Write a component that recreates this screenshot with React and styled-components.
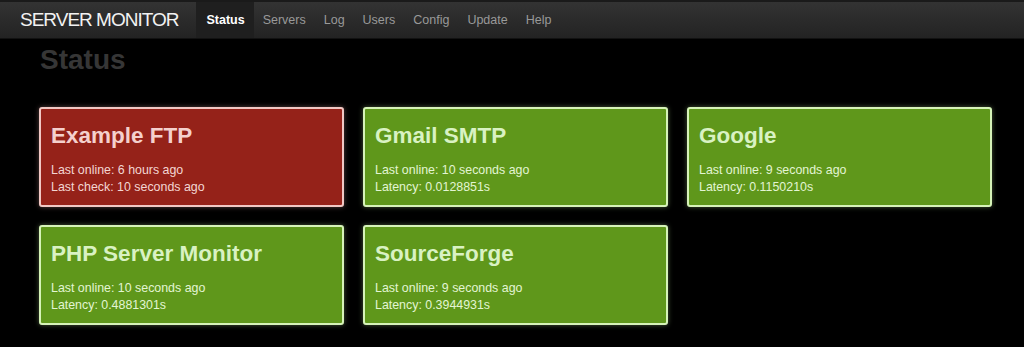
import React from "react";
import styled, { createGlobalStyle } from "styled-components";

const GlobalStyle = createGlobalStyle`
  html, body {
    margin: 0;
    padding: 0;
    background: #000;
  }
  body {
    font-family: "Liberation Sans", Arial, sans-serif;
  }
`;

const Page = styled.div`
  width: 1024px;
  min-height: 347px;
  background: #000;
`;

const Navbar = styled.nav`
  display: flex;
  align-items: stretch;
  height: 36px;
  border-top: 2px solid #1a1a1a;
  border-bottom: 1px solid #121212;
  background: linear-gradient(to bottom, #333333, #232323);
`;

const Brand = styled.a`
  display: flex;
  align-items: center;
  padding: 0 18px 0 20px;
  color: #f2f2f2;
  font-size: 19px;
  letter-spacing: -1px;
  text-decoration: none;
`;

const NavList = styled.ul`
  display: flex;
  margin: 0;
  padding: 0;
  list-style: none;
`;

const NavItem = styled.li`
  display: flex;
  align-items: center;
  padding: 0 9px;
  font-size: 12.5px;
  font-weight: ${(p) => (p.$active ? "bold" : "normal")};
  color: ${(p) => (p.$active ? "#ffffff" : "#999999")};
  background: ${(p) => (p.$active ? "#1f1f1f" : "transparent")};
  &:first-child {
    padding: 0 9px 0 10px;
  }
`;

const Content = styled.main`
  padding: 0 0 0 39px;
`;

const Heading = styled.h1`
  margin: 5px 0 31px 1px;
  font-size: 28px;
  line-height: 32px;
  font-weight: bold;
  color: #363636;
`;

const Grid = styled.div`
  display: grid;
  grid-template-columns: repeat(3, 305px);
  column-gap: 19px;
  row-gap: 18px;
`;

const themes = {
  off: { bg: "#952219", border: "#f1c8c4", title: "#f4d0cd", text: "#f3d6d3", glow: "rgba(255, 190, 185, 0.35)" },
  on: { bg: "#5f971b", border: "#d6f3b8", title: "#d9f2c3", text: "#e3f5d3", glow: "rgba(210, 255, 170, 0.35)" },
};

const Card = styled.div`
  box-sizing: border-box;
  height: 100px;
  padding: 14px 10px 0;
  border: 2px solid ${(p) => themes[p.$status].border};
  border-radius: 3px;
  background: ${(p) => themes[p.$status].bg};
  box-shadow: 0 0 5px ${(p) => themes[p.$status].glow};
`;

const CardTitle = styled.h2`
  margin: 0 0 13px;
  font-size: 22.5px;
  line-height: 26px;
  font-weight: bold;
  color: ${(p) => themes[p.$status].title};
`;

const CardLine = styled.div`
  font-size: 12.4px;
  line-height: 17px;
  color: ${(p) => themes[p.$status].text};
`;

const servers = [
  { name: "Example FTP", status: "off", lines: ["Last online: 6 hours ago", "Last check: 10 seconds ago"] },
  { name: "Gmail SMTP", status: "on", lines: ["Last online: 10 seconds ago", "Latency: 0.0128851s"] },
  { name: "Google", status: "on", lines: ["Last online: 9 seconds ago", "Latency: 0.1150210s"] },
  { name: "PHP Server Monitor", status: "on", lines: ["Last online: 10 seconds ago", "Latency: 0.4881301s"] },
  { name: "SourceForge", status: "on", lines: ["Last online: 9 seconds ago", "Latency: 0.3944931s"] },
];

const menu = ["Status", "Servers", "Log", "Users", "Config", "Update", "Help"];

export default function App() {
  return (
    <Page>
      <GlobalStyle />
      <Navbar>
        <Brand href="#">SERVER MONITOR</Brand>
        <NavList>
          {menu.map((m) => (
            <NavItem key={m} $active={m === "Status"}>
              {m}
            </NavItem>
          ))}
        </NavList>
      </Navbar>
      <Content>
        <Heading>Status</Heading>
        <Grid>
          {servers.map((s) => (
            <Card key={s.name} $status={s.status}>
              <CardTitle $status={s.status}>{s.name}</CardTitle>
              {s.lines.map((l) => (
                <CardLine key={l} $status={s.status}>
                  {l}
                </CardLine>
              ))}
            </Card>
          ))}
        </Grid>
      </Content>
    </Page>
  );
}
